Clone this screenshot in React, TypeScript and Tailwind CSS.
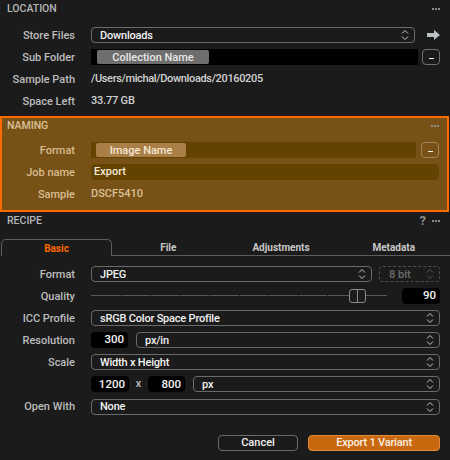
import React from "react";

const FONT = { fontFamily: 'Roboto, "Liberation Sans", Arial, sans-serif' };

function Dots({ className = "" }: { className?: string }) {
  return (
    <div className={`flex gap-[1px] ${className}`}>
      <span className="w-[2px] h-[2px] bg-[#8c8c8c]" />
      <span className="w-[2px] h-[2px] bg-[#8c8c8c]" />
      <span className="w-[2px] h-[2px] bg-[#8c8c8c]" />
    </div>
  );
}

function Chevrons({ color = "#c8c8c8" }: { color?: string }) {
  return (
    <svg width="8" height="12" viewBox="0 0 8 12" fill="none">
      <path d="M1 4.5 L4 1.5 L7 4.5" stroke={color} strokeWidth="1" />
      <path d="M1 7.5 L4 10.5 L7 7.5" stroke={color} strokeWidth="1" />
    </svg>
  );
}

function Select({ value, className = "" }: { value: string; className?: string }) {
  return (
    <div className={`h-4 flex items-center justify-between rounded-[4px] border border-[#6b6b6b] pl-[8px] pr-[5px] ${className}`}>
      <span className="text-[11px] leading-none tracking-[-0.2px] text-[#f2f2f2]">{value}</span>
      <Chevrons />
    </div>
  );
}

function MoreButton({ border = "border-[#707070]" }: { border?: string }) {
  return (
    <div className={`h-4 w-[18px] shrink-0 rounded-[4px] border ${border} flex items-end justify-center pb-[5px]`}>
      <span className="w-[5px] h-[1.5px] bg-[#f0f0f0]" />
    </div>
  );
}

function NumBox({ value, w }: { value: string; w: string }) {
  return (
    <div className={`h-4 ${w} shrink-0 rounded-[4px] bg-black flex items-center justify-end pr-[4px]`}>
      <span className="text-[11.5px] leading-none text-[#f4f4f4]">{value}</span>
    </div>
  );
}

function Label({ children, tone = "text-[#bdbdbd]" }: { children: React.ReactNode; tone?: string }) {
  return <div className={`h-4 flex items-center justify-end text-[11px] leading-none ${tone}`}>{children}</div>;
}

export default function App() {
  const tabs = ["Basic", "File", "Adjustments", "Metadata"];
  const ticks = [30, 59, 89, 118, 148, 177, 207, 236, 266];

  return (
    <div className="w-[450px] h-[460px] bg-[#1b1b1b] overflow-hidden font-medium" style={FONT}>
      {/* LOCATION */}
      <div className="h-[18px] flex items-center justify-between pl-[7px] pr-[10px]">
        <span className="text-[10.5px] text-[#b5b5b5]">LOCATION</span>
        <Dots />
      </div>
      <div className="grid grid-cols-[75px_1fr] gap-x-4 gap-y-[6px] mt-[9px] pr-[10px]">
        <Label>Store Files</Label>
        <div className="flex items-center">
          <Select value="Downloads" className="flex-1" />
          <div className="w-[25px] flex justify-end">
            <svg width="13" height="10" viewBox="0 0 13 10">
              <path d="M0 3 H7 V0 L13 5 L7 10 V7 H0 Z" fill="#b9c3c4" />
            </svg>
          </div>
        </div>

        <Label>Sub Folder</Label>
        <div className="flex items-center gap-[4px]">
          <div className="flex-1 h-4 bg-black flex items-center pl-[6px]">
            <span className="w-[112px] h-[14px] rounded-[2px] bg-[#6e6e6e] text-[11px] leading-none text-[#e6e6e6] flex items-center justify-center">
              Collection Name
            </span>
          </div>
          <MoreButton />
        </div>

        <Label>Sample Path</Label>
        <div className="h-4 flex items-center text-[11px] tracking-[-0.35px] text-[#d2d2d2]">/Users/michal/Downloads/20160205</div>

        <Label>Space Left</Label>
        <div className="h-4 flex items-center text-[11px] tracking-[-0.2px] text-[#d2d2d2]">33.77 GB</div>
      </div>

      {/* NAMING */}
      <div className="mt-[7px] w-[449px] border-2 border-[#ff6a00] bg-[#775115] pb-[8px]">
        <div className="h-4 flex items-center justify-between pl-[5px] pr-[8px]">
          <span className="text-[10.5px] text-[#dcc19a]">NAMING</span>
          <Dots />
        </div>
        <div className="grid grid-cols-[73px_1fr] gap-x-4 gap-y-[6px] mt-[8px] pr-[8px]">
          <Label tone="text-[#d9bd93]">Format</Label>
          <div className="flex items-center gap-[5px]">
            <div className="flex-1 h-4 bg-[#644200] flex items-center pl-[5px]">
              <span className="w-[90px] h-[14px] rounded-[2px] bg-[#a97f47] text-[11px] leading-none text-[#f3e6d2] flex items-center justify-center">
                Image Name
              </span>
            </div>
            <MoreButton border="border-[#a58558]" />
          </div>

          <Label tone="text-[#d9bd93]">Job name</Label>
          <div className="h-4 rounded-[4px] bg-[#644200] flex items-center pl-[3px] text-[11px] text-[#f4e9da]">Export</div>

          <Label tone="text-[#d9bd93]">Sample</Label>
          <div className="h-4 flex items-center text-[11px] text-[#dcc19a]">DSCF5410</div>
        </div>
      </div>

      {/* RECIPE */}
      <div className="h-[18px] flex items-center justify-between pl-[7px] pr-[10px]">
        <span className="text-[10.5px] text-[#b5b5b5]">RECIPE</span>
        <div className="flex items-center gap-[6px]">
          <span className="text-[13px] font-bold text-[#8c8c8c]">?</span>
          <Dots />
        </div>
      </div>

      <div className="mt-[9px] flex h-[17px] pl-[1px]">
        {tabs.map((t, i) =>
          i === 0 ? (
            <div key={t} className="w-[111px] border border-b-0 border-[#5c5c5c] rounded-t-[5px] flex items-center justify-center text-[10px] font-bold text-[#ff6a00]">
              {t}
            </div>
          ) : (
            <div key={t} className="flex-1 border-b border-[#5c5c5c] flex items-center justify-center text-[10px] font-bold text-[#c8c8c8]">
              {t}
            </div>
          )
        )}
      </div>

      <div className="grid grid-cols-[75px_1fr] gap-x-4 gap-y-[6px] mt-[10px] pr-[10px]">
        <Label>Format</Label>
        <div className="flex items-center gap-[7px]">
          <Select value="JPEG" className="flex-1" />
          <div className="h-4 w-[61px] flex items-center justify-between rounded-[4px] border border-dashed border-[#4e4e4e] pl-[9px] pr-[5px]">
            <span className="text-[11px] leading-none text-[#6c6c6c]">8 bit</span>
            <Chevrons color="#555555" />
          </div>
        </div>

        <Label>Quality</Label>
        <div className="flex items-center gap-[15px]">
          <div className="relative flex-1 h-4">
            <div className="absolute left-0 right-0 top-[7px] h-px bg-[#575757]" />
            {ticks.map((x) => (
              <div key={x} className="absolute top-[7px] w-px h-px bg-[#262626]" style={{ left: x }} />
            ))}
            <div className="absolute left-[258px] top-px w-[17px] h-[14px] rounded-[3px] border border-[#8a8a8a] bg-[#1b1b1b] flex justify-center">
              <span className="w-px h-full bg-[#8a8a8a]" />
            </div>
          </div>
          <NumBox value="90" w="w-[38px]" />
        </div>

        <Label>ICC Profile</Label>
        <Select value="sRGB Color Space Profile" />

        <Label>Resolution</Label>
        <div className="flex items-center gap-[8px]">
          <NumBox value="300" w="w-[37px]" />
          <Select value="px/in" className="flex-1" />
        </div>

        <Label>Scale</Label>
        <Select value="Width x Height" />

        <div />
        <div className="flex items-center">
          <NumBox value="1200" w="w-[38px]" />
          <span className="w-[19px] text-center text-[11px] text-[#bdbdbd]">x</span>
          <NumBox value="800" w="w-[37px]" />
          <Select value="px" className="flex-1 ml-[8px]" />
        </div>

        <Label>Open With</Label>
        <Select value="None" />
      </div>

      <div className="mt-[20px] flex justify-end gap-[10px] pr-[10px]">
        <div className="h-4 w-[80px] rounded-[4px] border border-[#6b6b6b] flex items-center justify-center text-[11px] leading-none text-[#f2f2f2]">
          Cancel
        </div>
        <div className="h-4 w-[132px] rounded-[4px] border border-[#e08a3a] bg-[#c9690f] flex items-center justify-center text-[11px] leading-none tracking-[-0.2px] text-[#fbefe2]">
          Export 1 Variant
        </div>
      </div>
    </div>
  );
}
